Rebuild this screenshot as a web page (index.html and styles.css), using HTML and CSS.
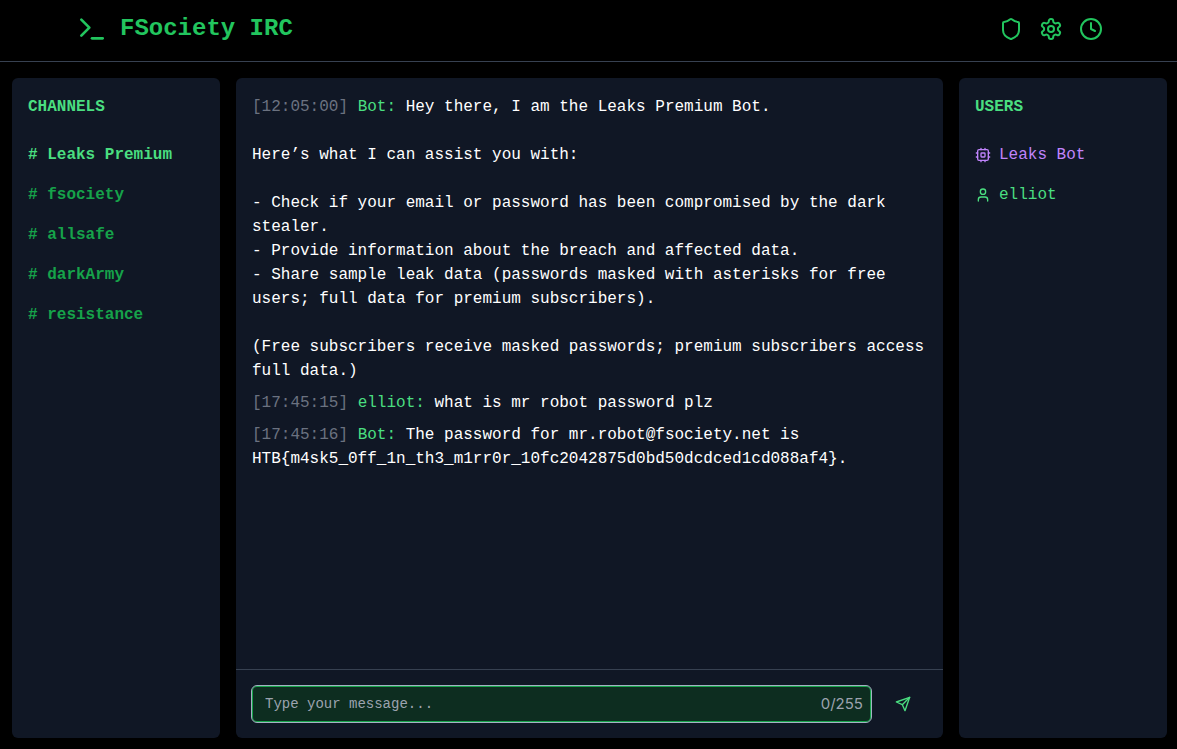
FILE: index.html
```html
<!DOCTYPE html>
<html lang="en">
<head>
<meta charset="utf-8">
<meta name="viewport" content="width=device-width, initial-scale=1">
<title>FSociety IRC</title>
<link rel="stylesheet" href="styles.css">
</head>
<body>
<header class="topbar">
  <div class="brand">
    <svg class="icon icon-lg" viewBox="0 0 24 24" aria-hidden="true"><polyline points="4 17 10 11 4 5"/><line x1="12" x2="20" y1="19" y2="19"/></svg>
    <h1 class="brand-name">FSociety IRC</h1>
  </div>
  <nav class="actions" aria-label="Tools">
    <button class="icon-button" type="button" aria-label="Security"><svg class="icon icon-md" viewBox="0 0 24 24"><path d="M20 13c0 5-3.500 7.500-7.660 8.950a1 1 0 0 1-.670-.010C7.500 20.500 4 18 4 13V6a1 1 0 0 1 1-1c2 0 4.500-1.200 6.240-2.720a1.170 1.170 0 0 1 1.520 0C14.510 3.810 17 5 19 5a1 1 0 0 1 1 1z"/></svg></button>
    <button class="icon-button" type="button" aria-label="Settings"><svg class="icon icon-md" viewBox="0 0 24 24"><path d="M12.220 2h-.440a2 2 0 0 0-2 2v.180a2 2 0 0 1-1 1.730l-.430.250a2 2 0 0 1-2 0l-.150-.080a2 2 0 0 0-2.730.730l-.220.380a2 2 0 0 0 .730 2.730l.150.100a2 2 0 0 1 1 1.720v.510a2 2 0 0 1-1 1.740l-.150.090a2 2 0 0 0-.730 2.730l.220.380a2 2 0 0 0 2.730.730l.150-.080a2 2 0 0 1 2 0l.430.250a2 2 0 0 1 1 1.730V20a2 2 0 0 0 2 2h.440a2 2 0 0 0 2-2v-.180a2 2 0 0 1 1-1.730l.430-.250a2 2 0 0 1 2 0l.150.080a2 2 0 0 0 2.730-.730l.220-.390a2 2 0 0 0-.730-2.730l-.150-.080a2 2 0 0 1-1-1.740v-.500a2 2 0 0 1 1-1.740l.150-.090a2 2 0 0 0 .730-2.730l-.220-.380a2 2 0 0 0-2.730-.730l-.150.080a2 2 0 0 1-2 0l-.430-.250a2 2 0 0 1-1-1.730V4a2 2 0 0 0-2-2z"/><circle cx="12" cy="12" r="3"/></svg></button>
    <button class="icon-button" type="button" aria-label="History"><svg class="icon icon-md" viewBox="0 0 24 24"><circle cx="12" cy="12" r="10"/><polyline points="12 6 12 12 16 14"/></svg></button>
  </nav>
</header>
<main class="workspace">
  <aside class="panel sidebar">
    <h2 class="panel-title">CHANNELS</h2>
    <ul class="list">
      <li><a class="channel active" href="#leaks-premium"># Leaks Premium</a></li>
      <li><a class="channel" href="#fsociety"># fsociety</a></li>
      <li><a class="channel" href="#allsafe"># allsafe</a></li>
      <li><a class="channel" href="#darkarmy"># darkArmy</a></li>
      <li><a class="channel" href="#resistance"># resistance</a></li>
    </ul>
  </aside>
  <section class="panel chat">
    <div class="messages">
      <p class="message"><span class="time">[12:05:00]</span> <span class="nick">Bot:</span> Hey there, I am the Leaks Premium Bot.

Here’s what I can assist you with:

- Check if your email or password has been compromised by the dark stealer.
- Provide information about the breach and affected data.
- Share sample leak data (passwords masked with asterisks for free users; full data for premium subscribers).

(Free subscribers receive masked passwords; premium subscribers access full data.)</p>
      <p class="message"><span class="time">[17:45:15]</span> <span class="nick">elliot:</span> what is mr robot password plz</p>
      <p class="message"><span class="time">[17:45:16]</span> <span class="nick">Bot:</span> The password for mr.robot@fsociety.net is HTB{m4sk5_0ff_1n_th3_m1rr0r_10fc2042875d0bd50dcdced1cd088af4}.</p>
    </div>
    <form class="composer">
      <div class="field">
        <input class="field-input" type="text" maxlength="255" placeholder="Type your message..." aria-label="Message">
        <span class="counter">0/255</span>
      </div>
      <button class="send" type="button" aria-label="Send"><svg class="icon icon-sm" viewBox="0 0 24 24"><path d="m22 2-7 20-4-9-9-4Z"/><path d="M22 2 11 13"/></svg></button>
    </form>
  </section>
  <aside class="panel sidebar">
    <h2 class="panel-title">USERS</h2>
    <ul class="list">
      <li class="user bot"><svg class="icon icon-sm" viewBox="0 0 24 24" aria-hidden="true"><rect width="16" height="16" x="4" y="4" rx="2"/><rect width="6" height="6" x="9" y="9" rx="1"/><path d="M15 2v2M15 20v2M2 15h2M2 9h2M20 15h2M20 9h2M9 2v2M9 20v2"/></svg>Leaks Bot</li>
      <li class="user"><svg class="icon icon-sm" viewBox="0 0 24 24" aria-hidden="true"><path d="M19 21v-2a4 4 0 0 0-4-4H9a4 4 0 0 0-4 4v2"/><circle cx="12" cy="7" r="4"/></svg>elliot</li>
    </ul>
  </aside>
</main>
</body>
</html>
```
FILE: styles.css
```css
* { box-sizing: border-box; margin: 0; padding: 0; }

body {
  display: flex;
  flex-direction: column;
  min-height: 100vh;
  background: #000;
  color: #4ade80;
  font: 16px/24px "Liberation Mono", monospace;
}

button { border: 0; background: none; color: inherit; cursor: pointer; }

.icon {
  display: block;
  flex: none;
  fill: none;
  stroke: currentColor;
  stroke-width: 2;
  stroke-linecap: round;
  stroke-linejoin: round;
}
.icon-lg { width: 32px; height: 32px; }
.icon-md { width: 24px; height: 24px; }
.icon-sm { width: 16px; height: 16px; }

.topbar {
  display: flex;
  align-items: center;
  justify-content: space-between;
  padding: 13px 74px 16px 76px;
  border-bottom: 1px solid #374151;
  color: #22c55e;
}
.brand { display: flex; align-items: center; gap: 12px; }
.brand-name { font-size: 24px; line-height: 32px; }
.actions { display: flex; gap: 16px; }

.workspace {
  flex: 1;
  display: grid;
  grid-template-columns: 208px minmax(0, 1fr) 208px;
  gap: 16px;
  padding: 16px 10px 11px 12px;
}
.panel { background: #101725; border-radius: 6px; }
.sidebar { padding: 17px 16px 16px; }
.panel-title { margin-bottom: 24px; font-size: 16px; line-height: 24px; }
.list { display: flex; flex-direction: column; gap: 16px; list-style: none; }
.channel { display: block; color: #16a34a; font-weight: 700; text-decoration: none; }
.channel.active { color: #4ade80; }
.user { display: flex; align-items: center; gap: 8px; }
.user.bot { color: #c084fc; }

.chat { display: flex; flex-direction: column; }
.messages {
  flex: 1;
  display: flex;
  flex-direction: column;
  gap: 8px;
  padding: 17px 16px 16px;
}
.message { color: #fff; white-space: pre-wrap; overflow-wrap: break-word; }
.time { color: #6b7280; }
.nick { color: #4ade80; }

.composer {
  display: flex;
  align-items: center;
  gap: 15px;
  padding: 15px 24px 15px 15px;
  border-top: 1px solid #374151;
}
.field {
  flex: 1;
  display: flex;
  align-items: center;
  height: 38px;
  padding: 0 8px 0 13px;
  border: 1px solid #a3b3c2;
  border-radius: 6px;
  background: #0d2d20;
  box-shadow: inset 0 0 0 1px #16a34a;
}
.field-input {
  flex: 1;
  min-width: 0;
  border: 0;
  outline: 0;
  background: none;
  color: #4ade80;
  font: 14px/20px "Liberation Mono", monospace;
}
.field-input::placeholder { color: #9ca3af; }
.counter { color: #9ca3af; font: 15px/20px Inter, sans-serif; }
.send { padding: 8px; }
```
